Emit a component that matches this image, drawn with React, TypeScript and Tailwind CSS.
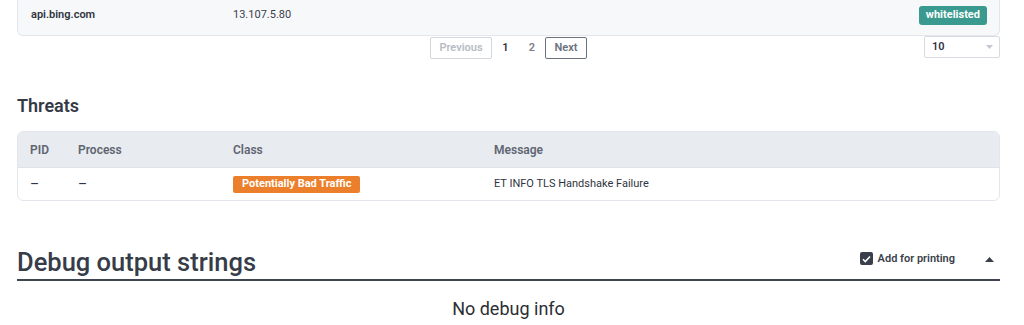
import React from 'react';

const font = { fontFamily: 'Roboto, "Noto Sans", Arial, sans-serif' };

const threats = [
  { pid: '–', process: '–', cls: 'Potentially Bad Traffic', message: 'ET INFO TLS Handshake Failure' },
];

export default function App() {
  return (
    <div className="w-[1024px] h-[325px] bg-white overflow-hidden pl-[17px] pr-[24px] text-[#343a46]" style={font}>
      {/* tail of the hosts table */}
      <div className="h-[36px] bg-[#f7f8fa] border-x border-b border-[#e3e7ed] rounded-b-md flex items-center pb-[4px] pl-[13px] pr-[12px] text-[11px]">
        <span className="w-[202px] font-semibold text-[#2f3440]">api.bing.com</span>
        <span className="text-[#3a3f4a]">13.107.5.80</span>
        <span className="ml-auto bg-[#3a9a8f] text-white font-bold rounded-[3px] h-[19px] px-[7px] flex items-center">whitelisted</span>
      </div>

      {/* pagination */}
      <div className="grid grid-cols-[1fr_auto_1fr] items-start h-[22px]">
        <div />
        <div className="flex items-center text-[11px] font-semibold pt-[1px]">
          <button className="h-[22px] w-[62px] border border-[#d3d7dd] rounded-[2px] text-[#b7bbc3]">Previous</button>
          <span className="w-[27px] text-center text-[#2f3440]">1</span>
          <span className="w-[26px] text-center text-[#7b818c]">2</span>
          <button className="h-[22px] w-[42px] border border-[#6b717c] rounded-[2px] text-[#6b717c]">Next</button>
        </div>
        <div className="flex justify-end">
          <div className="w-[76px] h-[22px] border border-[#d8dce2] rounded-[2px] flex items-center pl-[7px] pr-[6px] text-[11px] font-semibold text-[#2f3440]">
            <span>10</span>
            <svg className="ml-auto" width="7" height="4" viewBox="0 0 7 4"><path d="M0 0h7L3.5 4z" fill="#c3c7ce" /></svg>
          </div>
        </div>
      </div>

      {/* threats */}
      <h2 className="mt-[36px] text-[18px] leading-[24px] font-semibold text-[#343a46]">Threats</h2>
      <div className="mt-[13px] border border-[#e3e7ed] rounded-md overflow-hidden">
        <div className="h-[36px] bg-[#e8ebf0] flex items-center pl-[12px] text-[12px] font-semibold text-[#5e6571] border-b border-[#dfe3ea]">
          <span className="w-[48px]">PID</span>
          <span className="w-[155px]">Process</span>
          <span className="w-[261px]">Class</span>
          <span>Message</span>
        </div>
        {threats.map((t, i) => (
          <div key={i} className="h-[32px] flex items-center pl-[12px] text-[11px] text-[#2f3440]">
            <span className="w-[48px] text-[14px]">{t.pid}</span>
            <span className="w-[155px] text-[14px]">{t.process}</span>
            <span className="w-[261px]">
              <span className="inline-flex items-center h-[17px] px-[9px] bg-[#ec7f2b] text-white font-bold rounded-[2px]">{t.cls}</span>
            </span>
            <span>{t.message}</span>
          </div>
        ))}
      </div>

      {/* debug output */}
      <div className="mt-[46px] flex items-end border-b-2 border-[#3e4450] pb-[2px]">
        <h2 className="text-[25.5px] leading-[30px] font-medium text-[#363c48]">Debug output strings</h2>
        <label className="ml-auto flex items-center gap-[5px] mb-[10px] text-[11px] font-semibold text-[#3a3f4b]">
          <span className="w-[13px] h-[13px] rounded-[2px] bg-[#3a3f4b] flex items-center justify-center">
            <svg width="9" height="8" viewBox="0 0 9 8"><path d="M1 4.2l2.3 2.3L8 1.5" stroke="#fff" strokeWidth="1.6" fill="none" /></svg>
          </span>
          Add for printing
        </label>
        <svg className="ml-[30px] mr-[6px] mb-[15px]" width="9" height="5" viewBox="0 0 9 5"><path d="M0 5h9L4.5 0z" fill="#3a3f4b" /></svg>
      </div>
      <p className="mt-[16px] text-center text-[18px] leading-[24px] text-[#2b2e33]">No debug info</p>
    </div>
  );
}
